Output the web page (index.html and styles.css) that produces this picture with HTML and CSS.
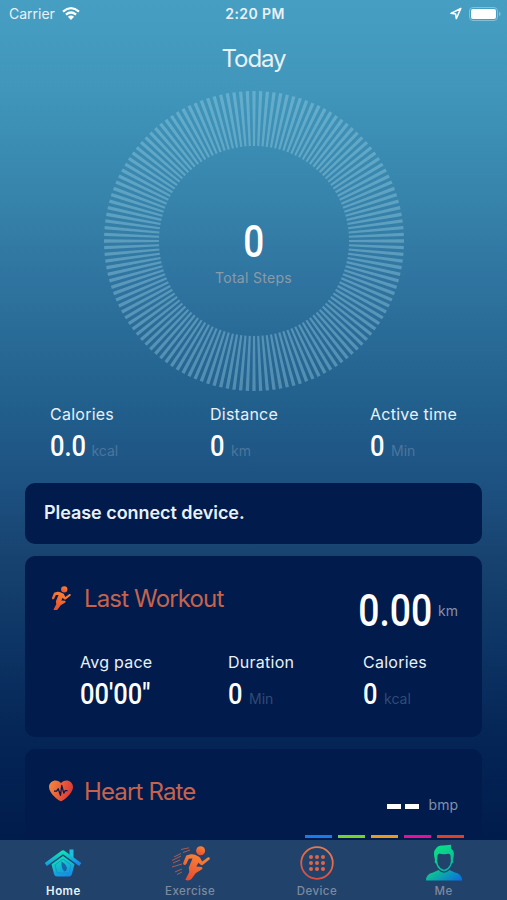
FILE: index.html
```
<!DOCTYPE html>
<html lang="en">
<head>
  <meta charset="utf-8">
  <title>Today</title>
  <link rel="stylesheet" href="styles.css">
</head>
<body>
  <!-- shared gradients for the icons -->
  <svg class="defs" width="0" height="0">
    <defs>
      <linearGradient id="orange" x1="0.7" y1="0" x2="0.3" y2="1">
        <stop offset="0" stop-color="#fb8535"/>
        <stop offset="1" stop-color="#e94d30"/>
      </linearGradient>
      <linearGradient id="ringOrange" x1="0.7" y1="0" x2="0.3" y2="1">
        <stop offset="0" stop-color="#ea7d4b"/>
        <stop offset="1" stop-color="#d94c40"/>
      </linearGradient>
      <linearGradient id="heart" x1="0" y1="0" x2="1" y2="0.3">
        <stop offset="0" stop-color="#f58a3c"/>
        <stop offset="1" stop-color="#df3a38"/>
      </linearGradient>
      <linearGradient id="house" x1="0.3" y1="0" x2="0.7" y2="1">
        <stop offset="0" stop-color="#10e6b4"/>
        <stop offset="1" stop-color="#1689ee"/>
      </linearGradient>
      <linearGradient id="person" gradientUnits="userSpaceOnUse" x1="10" y1="4" x2="34" y2="38">
        <stop offset="0" stop-color="#09e283"/>
        <stop offset="0.5" stop-color="#0bbf96"/>
        <stop offset="1" stop-color="#0b6fe0"/>
      </linearGradient>
      <symbol id="runner" viewBox="0 0 28 34" overflow="visible">
        <circle cx="19.6" cy="4.7" r="4.5"/>
        <path d="M5.2 9.6 9.8 8.3Q12 7.8 14 8.800L18 10.800Q19.500 11.800 20 13.500L21.200 15.500 27 11.200Q29.300 11 28.700 13.300L22 18.800Q20.600 19.700 19.400 18.600L17.400 16.800 15.300 20.500 20.400 20.900Q22.200 21.600 21 23.300L14.600 27.200 10.500 33Q7.500 35.400 4.300 33.700L8.300 26 7.800 21.500 11.500 12.600 7.800 12.700 5.500 17.800Q3.800 20 2.200 18.100 2 17.200 2.600 16Z"/>
      </symbol>
    </defs>
  </svg>

  <header class="status-bar">
    <div class="carrier">
      <span>Carrier</span>
      <svg width="18" height="13" viewBox="0 0 18 13" fill="none" stroke="#fff" stroke-width="2.2">
        <path d="M1 4.6Q9-2.2 17 4.6M3.9 7.6Q9 3.4 14.1 7.6"/>
        <path d="M9 13 5.9 9.7Q9 7.2 12.1 9.7Z" fill="#fff" stroke="none"/>
      </svg>
    </div>
    <div class="clock">2:20 PM</div>
    <div class="indicators">
      <svg width="12" height="13" viewBox="0 0 12 13" fill="none" stroke="#fff" stroke-width="1.5" stroke-linejoin="round">
        <path d="M10.8 1.500 1 6.300 5.600 6.900 6.300 11.600Z"/>
      </svg>
      <svg class="battery" width="32" height="14" viewBox="0 0 32 14">
        <rect x="0.5" y="0.5" width="28" height="13" rx="3.5" fill="none" stroke="#83bfd8"/>
        <rect x="2" y="2" width="25" height="10" rx="2" fill="#fff"/>
        <path d="M30 4.8Q31.6 5.4 31.6 7T30 9.2Z" fill="#83bfd8"/>
      </svg>
    </div>
  </header>

  <main>
    <h1>Today</h1>

    <section class="ring">
      <svg width="300" height="300" viewBox="0 0 300 300">
        <circle class="ticks" cx="150" cy="150" r="122.5" pathLength="280"/>
      </svg>
      <div class="ring-text">
        <div class="num big">0</div>
        <div class="steps">Total Steps</div>
      </div>
    </section>

    <section class="totals">
      <div class="stat">
        <h3>Calories</h3>
        <p><span class="num">0.0</span><span class="unit u3">kcal</span></p>
      </div>
      <div class="stat">
        <h3>Distance</h3>
        <p><span class="num">0</span><span class="unit">km</span></p>
      </div>
      <div class="stat">
        <h3>Active time</h3>
        <p><span class="num">0</span><span class="unit">Min</span></p>
      </div>
    </section>

    <section class="card notice">Please connect device.</section>

    <section class="card workout">
      <div class="card-head">
        <svg class="icon" width="21" height="24" viewBox="1 0 28 34" fill="url(#orange)"><use href="#runner" width="28" height="34"/></svg>
        <h2>Last Workout</h2>
        <div class="total"><span class="num big">0.00</span><span class="unit">km</span></div>
      </div>
      <div class="workout-stats">
        <div class="stat">
          <h3>Avg pace</h3>
          <p><span class="num">00'00"</span></p>
        </div>
        <div class="stat">
          <h3>Duration</h3>
          <p><span class="num">0</span><span class="unit">Min</span></p>
        </div>
        <div class="stat">
          <h3>Calories</h3>
          <p><span class="num">0</span><span class="unit">kcal</span></p>
        </div>
      </div>
    </section>

    <section class="card heart-rate">
      <div class="card-head">
        <svg class="icon" width="24" height="22" viewBox="0 0 24 22">
          <path fill="url(#heart)" d="M12 21.2C9.5 20.8 0 13.5 0 7.1 0 .2 8.7-1.7 12 3.3 15.3-1.7 24 .2 24 7.1 24 13.5 14.5 20.8 12 21.2Z"/>
          <path fill="none" stroke="#001b4c" stroke-width="1.3" stroke-linejoin="round" d="M5 11.2H7.6L9.2 8.8 11.5 15.3 12.7 5.5 14.8 13.2 16.2 10.6H18.5"/>
        </svg>
        <h2>Heart Rate</h2>
        <div class="bpm"><i></i><i></i><span class="unit">bmp</span></div>
      </div>
      <div class="zones">
        <i class="blue"></i><i class="green"></i><i class="amber"></i><i class="pink"></i><i class="red"></i>
      </div>
    </section>
  </main>

  <nav class="tab-bar">
    <a class="tab active">
      <svg width="40" height="40" viewBox="0 0 40 40">
        <path fill="none" stroke="url(#house)" stroke-width="3.6" stroke-linejoin="round" d="M2.800 21.500 20 9 37.200 21.500"/>
        <path fill="#20bde0" d="M26.500 6.500H30.500V15L26.500 12Z"/>
        <path fill="url(#house)" d="M20 13 31.500 21.300 29 31Q28.300 33.500 26 33.500H14Q11.700 33.500 11 31L8.500 21.300Z"/>
        <path fill="none" stroke="#148fc0" stroke-width="0.8" d="M20 16 28 22 26 30H14L12 22Z"/>
        <path fill="#1566a8" d="M18.5 18.5Q24 22 24 25.500 23.500 28 21.500 28.500 18 26 18.500 18.500Z"/>
      </svg>
      <span>Home</span>
    </a>
    <a class="tab">
      <svg width="40" height="40" viewBox="0 0 40 40" fill="url(#orange)">
        <use href="#runner" x="11" y="3" width="28" height="34"/>
        <path fill="none" stroke="#b5604f" stroke-width="0.9" d="M11 6.500 19 4.800M13 9.500 20 7M4 14 11 10.500M2 17.500 11 13M3 20 10 17M2 24 12 21M5 29 12 26M7 31.500 12 29"/>
      </svg>
      <span>Exercise</span>
    </a>
    <a class="tab">
      <svg width="40" height="40" viewBox="0 0 40 40">
        <circle cx="20" cy="20" r="15.8" fill="none" stroke="url(#ringOrange)" stroke-width="1.8"/>
        <g fill="#e06548">
          <circle cx="14" cy="14" r="2"/><circle cx="20" cy="14" r="2"/><circle cx="26" cy="14" r="2"/>
          <circle cx="14" cy="20" r="2"/><circle cx="20" cy="20" r="2"/><circle cx="26" cy="20" r="2"/>
          <circle cx="14" cy="26" r="2"/><circle cx="20" cy="26" r="2"/><circle cx="26" cy="26" r="2"/>
        </g>
      </svg>
      <span>Device</span>
    </a>
    <a class="tab">
      <svg width="40" height="40" viewBox="0 0 40 40">
        <path fill="url(#person)" d="M2 37.500Q2 31 9 29.500L14.500 27Q20 32.500 25.500 27L31 29.500Q38 31 38 37.500Z"/>
        <path fill="url(#person)" fill-rule="evenodd" d="M11 17Q8.500 9 12 5.500Q14 2 19 2.500L27 1.800V5.500Q31.500 8 29 17Q30 19.500 28 20.500Q25.500 28 20 28.500 14.500 28 12 20.500 10 19.500 11 17ZM13.500 12.500Q11.500 24.500 20 26.800 28.500 24.500 26.500 12.500 26 10.500 24 10.800 18 12 15.500 10.500 14 10.800 13.500 12.500Z"/>
      </svg>
      <span>Me</span>
    </a>
  </nav>
</body>
</html>
```
FILE: styles.css
```
* {
  box-sizing: border-box;
}

body {
  margin: 0;
  height: 900px;
  display: flex;
  flex-direction: column;
  overflow: hidden;
  font-family: Inter, "Liberation Sans", sans-serif;
  color: #e9f1f7;
  background: linear-gradient(#469fc2 0, #4096bb 90px, #3683ab 200px, #2f74a0 280px, #22608d 400px, #1d5282 480px, #17426f 560px, #0d3565 640px, #042556 740px, #001c4c 840px);
}

h1, h2, h3, p {
  margin: 0;
  font-weight: 400;
}

svg {
  display: block;
  flex: none;
}

.defs {
  position: absolute;
}

.status-bar {
  display: grid;
  grid-template-columns: 1fr auto 1fr;
  align-items: center;
  height: 28px;
  padding: 0 6px 1px 9px;
  font-size: 14px;
}

.carrier {
  display: flex;
  gap: 7px;
  align-items: center;
}

.clock {
  font-weight: 600;
  letter-spacing: 0.4px;
}

.indicators {
  display: flex;
  justify-content: flex-end;
  align-items: center;
  gap: 7px;
}

main {
  flex: 1;
  min-height: 0;
  overflow: hidden;
}

h1 {
  height: 63px;
  line-height: 62px;
  font-size: 24px;
  letter-spacing: -1.1px;
  text-align: center;
}

.ring {
  display: grid;
  justify-items: center;
  align-items: center;
  height: 300px;
}

.ring > * {
  grid-area: 1 / 1;
}

.ticks {
  fill: none;
  stroke: rgba(160, 213, 232, 0.38);
  stroke-width: 55;
  stroke-dasharray: 1;
  stroke-dashoffset: 0.5;
}

.ring-text {
  text-align: center;
  padding-top: 24px;
}

/* condensed digits */
.num {
  display: inline-block;
  font: 500 30px/30px Roboto, sans-serif;
  color: #fff;
  transform: scaleX(0.85);
  transform-origin: left;
}

.big {
  font-size: 45px;
  line-height: 45px;
}

.ring-text .num {
  transform: scaleX(0.82);
  transform-origin: center;
}

.steps {
  margin-top: 4px;
  font-size: 14px;
  line-height: 20px;
  letter-spacing: 0.3px;
  color: #8a9ba8;
}

.totals {
  display: grid;
  grid-template-columns: 160px 160px 1fr;
  height: 92px;
  padding: 13px 0 0 50px;
}

.stat h3 {
  font-size: 16px;
  line-height: 21px;
  letter-spacing: 0.25px;
}

.stat p {
  display: flex;
  align-items: baseline;
  margin-top: 6px;
}

.unit {
  margin-left: 4px;
  font-size: 14px;
  color: #4c759d;
}

.u3 {
  margin-left: -1px;
}

.card {
  margin: 0 25px 12px;
  border-radius: 10px;
  background: #001b4c;
}

.notice {
  height: 61px;
  padding-left: 19px;
  font-size: 18px;
  font-weight: 600;
  line-height: 60px;
  letter-spacing: -0.05px;
}

.workout {
  height: 181px;
}

.card-head {
  display: flex;
  align-items: center;
  height: 84px;
  padding: 0 24px;
}

.card-head .icon {
  width: 24px;
  margin-right: 11px;
}

h2 {
  font-size: 24px;
  letter-spacing: -0.85px;
  color: #c7634c;
}

.total, .bpm {
  display: flex;
  align-items: center;
  margin-left: auto;
}

.total {
  padding-top: 24px;
}

.total .num {
  transform: scaleX(0.83);
  transform-origin: right;
}

.total .unit, .bpm .unit {
  margin-left: 6px;
  color: #8390a9;
}

.workout-stats {
  display: grid;
  grid-template-columns: 148px 135px 1fr;
  padding: 12px 0 0 55px;
}

.workout .stat .unit {
  color: #324a74;
}

.heart-rate {
  height: 160px;
}

.bpm {
  gap: 4px;
  padding-top: 26px;
}

.bpm i {
  width: 14px;
  height: 5px;
  margin-top: 4px;
  background: #fff;
}

.zones {
  display: flex;
  justify-content: flex-end;
  gap: 6px;
  padding: 2px 18px 0 0;
}

.zones i {
  width: 27px;
  height: 3px;
}

.blue { background: #187bea; }
.green { background: #73d42b; }
.amber { background: #e69a20; }
.pink { background: #e5109a; }
.red { background: #dc4025; }

.tab-bar {
  display: grid;
  grid-template-columns: repeat(4, 1fr);
  height: 60px;
  background: #21426b;
}

.tab {
  display: flex;
  flex-direction: column;
  align-items: center;
  padding-top: 3px;
  font-size: 11.5px;
  font-weight: 500;
  line-height: 17px;
  letter-spacing: 0.45px;
  color: #7d8b9e;
}

.active {
  color: #e3f5fc;
  font-weight: 600;
}
```
